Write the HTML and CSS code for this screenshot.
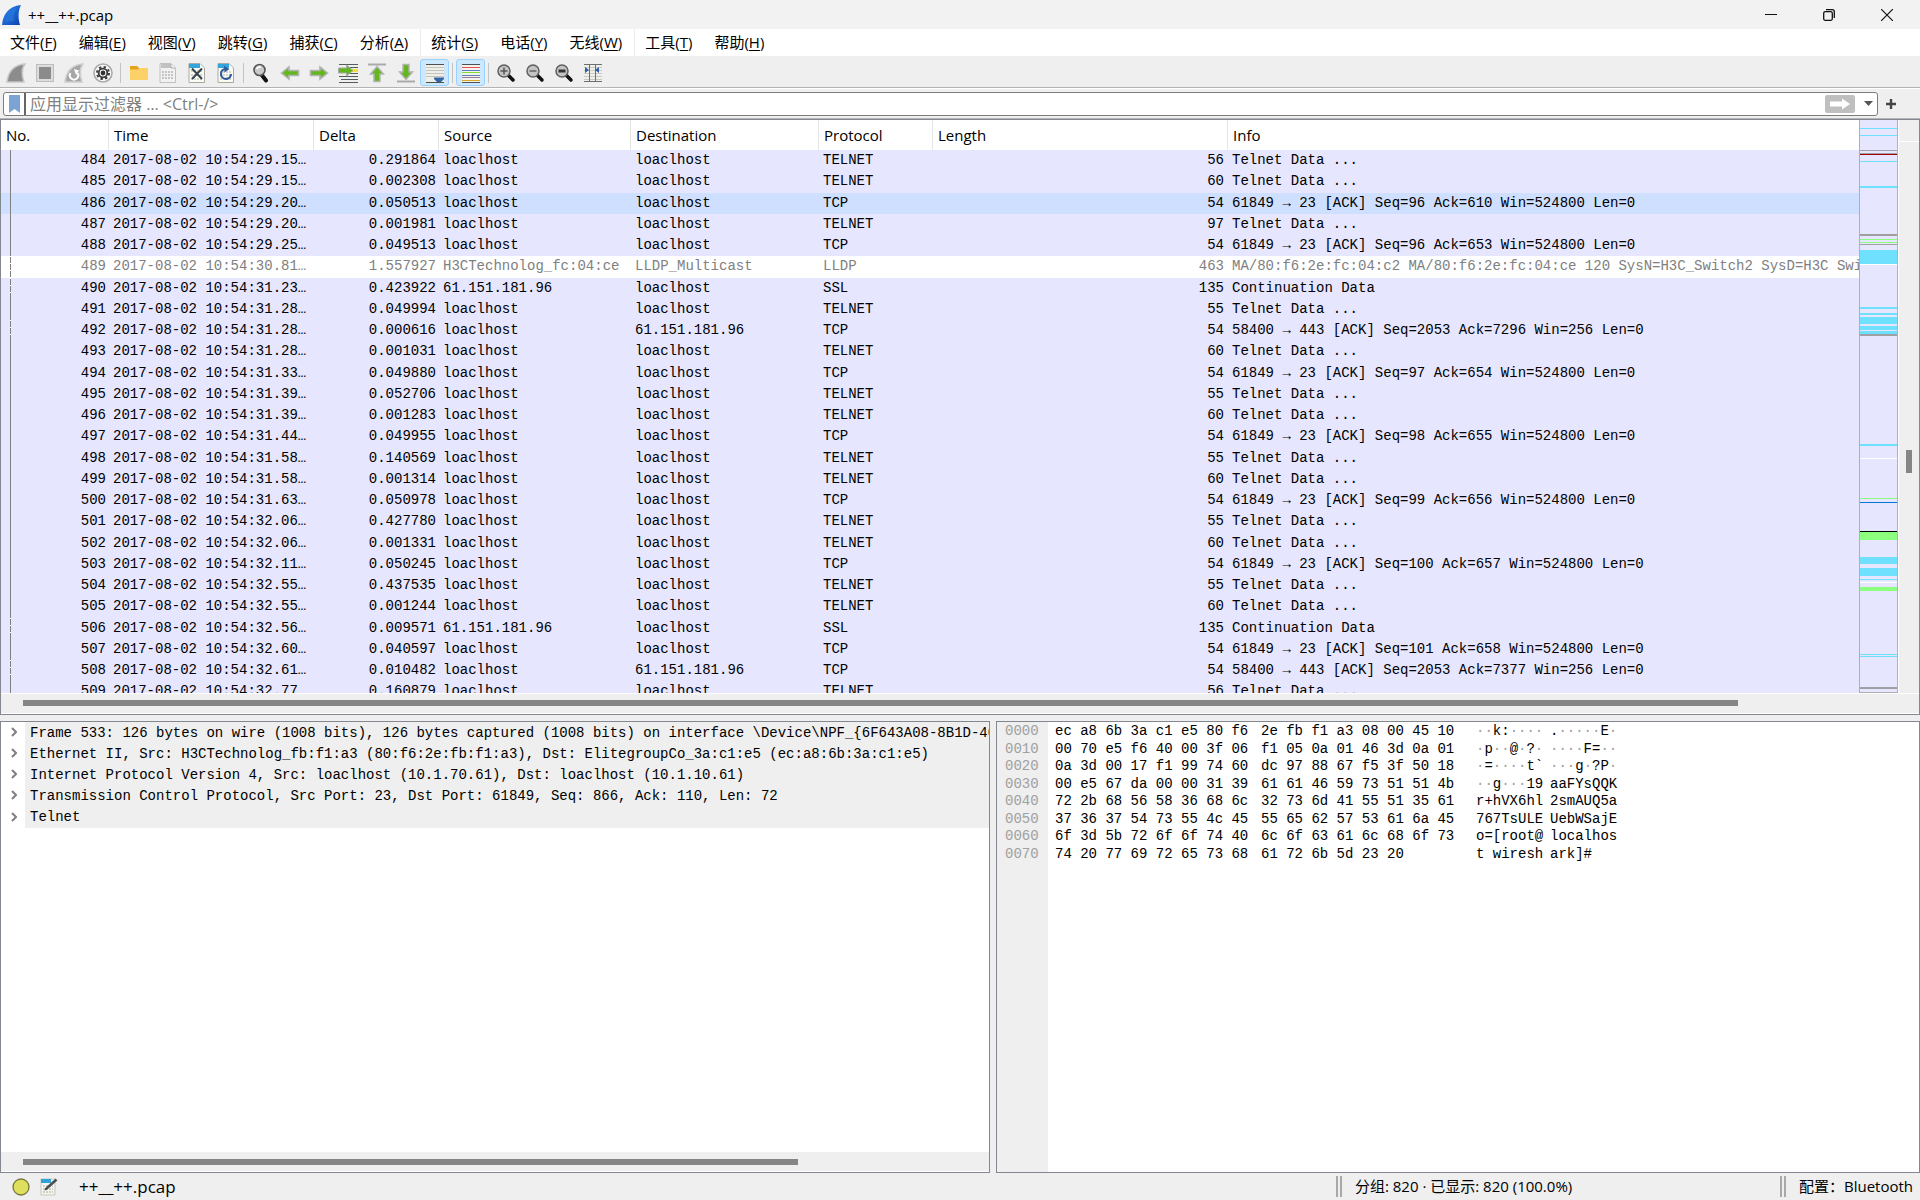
FILE: index.html
```html
<!DOCTYPE html>
<html lang="zh-CN">
<head>
<meta charset="utf-8">
<title>++__++.pcap</title>
<link rel="stylesheet" href="styles.css">
</head>
<body>
<header class="titlebar">
  <svg class="app-icon" width="20" height="20" viewBox="0 0 20 20"><defs><linearGradient id="fin" x1="0" y1="0" x2="1" y2="1"><stop offset="0" stop-color="#2f8cf0"/><stop offset="1" stop-color="#0a3fae"/></linearGradient></defs><path d="M0 20C1 10 6 1 19 0C16 6 16 13 18 20Z" fill="url(#fin)"/><path d="M3 17C5 9 9 4 15 2C12 7 11 12 12 16Z" fill="#2a7be0" opacity=".6"/></svg>
  <h1 class="title">++__++.pcap</h1>
  <div class="window-buttons">
    <button aria-label="最小化"><svg width="12" height="12" viewBox="0 0 12 12"><path d="M0 5.5H12" stroke="#111"/></svg></button>
    <button aria-label="还原"><svg width="12" height="12" viewBox="0 0 12 12" fill="none" stroke="#111" stroke-width="1.3"><rect x=".7" y="2.7" width="8.6" height="8.6" rx="1.5"/><path d="M3 .7H9.3Q11.3 .7 11.3 2.7V9"/></svg></button>
    <button aria-label="关闭"><svg width="12" height="12" viewBox="0 0 12 12"><path d="M0 0L12 12M12 0L0 12" stroke="#111" stroke-width="1.2"/></svg></button>
  </div>
</header>

<nav class="menubar">
  <button>文件(<u>F</u>)</button><button>编辑(<u>E</u>)</button><button>视图(<u>V</u>)</button><button>跳转(<u>G</u>)</button><button>捕获(<u>C</u>)</button><button>分析(<u>A</u>)</button>
  <button class="group">统计(<u>S</u>)</button><button>电话(<u>Y</u>)</button><button>无线(<u>W</u>)</button>
  <button class="group">工具(<u>T</u>)</button><button>帮助(<u>H</u>)</button>
</nav>

<div class="toolbar">
  <button aria-label="开始捕获"><svg width="20" height="20" viewBox="0 0 20 20"><path d="M1 19C2 10 7 2 19 1C15 6 16 13 18 19Z" fill="#8c8c8c" stroke="#c8c8c8" stroke-width="1.6"/></svg></button>
  <button aria-label="停止捕获"><svg width="20" height="20" viewBox="0 0 20 20"><rect x="1.5" y="1.5" width="17" height="17" fill="#ddd" stroke="#bdbdbd"/><rect x="4" y="4" width="12" height="12" fill="#8b8b8b"/></svg></button>
  <button aria-label="重新开始捕获"><svg width="20" height="20" viewBox="0 0 20 20"><path d="M1 19C2 10 7 2 19 1C15 6 16 13 18 19Z" fill="#a6a6a6" stroke="#cfcfcf" stroke-width="1.6"/><path d="M6.500 10A4.200 4.200 0 1 0 13.500 10" fill="none" stroke="#fff" stroke-width="2"/><path d="M10 6L15 7.500L12 12Z" fill="#fff"/></svg></button>
  <button aria-label="捕获选项"><svg width="20" height="20" viewBox="0 0 20 20"><circle cx="10" cy="10" r="9" fill="#fafafa" stroke="#aaa" stroke-width="1.600"/><circle cx="10" cy="10" r="6" fill="none" stroke="#3a3a3a" stroke-width="2" stroke-dasharray="2.350 2.350"/><circle cx="10" cy="10" r="4.300" fill="#fff" stroke="#3a3a3a" stroke-width="1.800"/><circle cx="10" cy="10" r="2.400" fill="#333"/></svg></button>
  <span class="sep"></span>
  <button aria-label="打开"><svg width="20" height="20" viewBox="0 0 20 20"><path d="M1 3H8L10 5H18V16H1Z" fill="#e5a21c"/><path d="M1 6.500H9L10.500 5H19V17H1Z" fill="#fbd168"/></svg></button>
  <button aria-label="保存"><svg width="20" height="20" viewBox="0 0 20 20"><path d="M2 .5H13L17.500 5V19.500H2Z" fill="#f2f2f2" stroke="#c0c0c0"/><path d="M3 1H13V5H3Z" fill="#c2c2c2"/><path d="M13 1V5H17" fill="#fff" stroke="#aaa"/><path d="M4 9H16M4 12H16M4 15H16" stroke="#c4c4c4" stroke-width="2" stroke-dasharray="2 1"/></svg></button>
  <button aria-label="关闭文件"><svg width="20" height="20" viewBox="0 0 20 20"><path d="M2 .5H13L17.500 5V19.500H2Z" fill="#fbfbf4" stroke="#aaa9a0"/><path d="M2 1H13L17 5H2Z" fill="#31a5dc"/><path d="M13 1V5H17" fill="#fff"/><path d="M4 8H16M4 12H16M4 16H16" stroke="#d5d5cd" stroke-width="2" stroke-dasharray="2 1"/><path d="M5 5.500L15 16M15 5.500L5 16" stroke="#35434c" stroke-width="2"/></svg></button>
  <button aria-label="重新载入"><svg width="20" height="20" viewBox="0 0 20 20"><path d="M2 .5H13L17.500 5V19.500H2Z" fill="#fbfbf4" stroke="#aaa9a0"/><path d="M2 1H13L17 5H2Z" fill="#31a5dc"/><path d="M13 1V5H17" fill="#fff"/><path d="M4 9H16M4 12H16M4 16H16" stroke="#d5d5cd" stroke-width="2" stroke-dasharray="2 1"/><path d="M9 6A5 5 0 1 0 15 11" fill="none" stroke="#2f5a9c" stroke-width="2.200"/><path d="M8 3L13.500 6L8.500 9.500Z" fill="#2f5a9c"/></svg></button>
  <span class="sep narrow"></span>
  <button aria-label="查找"><svg width="20" height="20" viewBox="0 0 20 20"><path d="M10 11L15 17.500" stroke="#111" stroke-width="4" stroke-linecap="round"/><circle cx="8.500" cy="7" r="5.500" fill="#c9c9c9" stroke="#555" stroke-width="1.600"/><path d="M5.500 6Q7 3.500 10 4" stroke="#fff" fill="none" stroke-width="1.500"/></svg></button>
  <button aria-label="后退"><svg width="20" height="20" viewBox="0 0 20 20"><path d="M1.500 10L9 4V7.500H18.500V12.500H9V16Z" fill="#62b71c" stroke="#b3b3b3" stroke-width="1.600"/></svg></button>
  <button aria-label="前进"><svg width="20" height="20" viewBox="0 0 20 20"><path d="M18.500 10L11 4V7.500H1.500V12.500H11V16Z" fill="#62b71c" stroke="#b3b3b3" stroke-width="1.600"/></svg></button>
  <button aria-label="转到分组"><svg width="20" height="20" viewBox="0 0 20 20"><path d="M1 1.500H20M12 4.500H20M12 10.500H20M1 13.500H20M3 16.500H20M1 19.500H20" stroke="#555c5c"/><path d="M13 7.500H20" stroke="#f7df3b" stroke-width="3"/><path d="M15 7.500L8.500 2V5H.5V10H8.500V13Z" fill="#62b71c" stroke="#aaa"/></svg></button>
  <button aria-label="首个分组"><svg width="20" height="20" viewBox="0 0 20 20"><path d="M1 1.500H19" stroke="#aaa" stroke-width="2"/><path d="M10 3.500L16.500 11H13V18.500H7V11H3.500Z" fill="#62b71c" stroke="#b3b3b3" stroke-width="1.400"/></svg></button>
  <button aria-label="末个分组"><svg width="20" height="20" viewBox="0 0 20 20"><path d="M1 18.500H19" stroke="#aaa" stroke-width="2"/><path d="M10 16.500L16.500 9H13V1.500H7V9H3.500Z" fill="#62b71c" stroke="#b3b3b3" stroke-width="1.400"/></svg></button>
  <button class="on" aria-label="自动滚动" aria-pressed="true"><svg width="20" height="20" viewBox="0 0 20 20"><rect x="1" y="1" width="18" height="18" fill="#efefe9"/><path d="M1 4.500H19M1 7.500H19M1 10.500H19M1 13.500H19" stroke="#c4c4bc"/><path d="M1 1.500H19M1 19.500H19" stroke="#4b5152" stroke-width="1.200"/><path d="M9 14.500H19V16L16 19H12L9 16Z" fill="#3465a4"/></svg></button>
  <span class="sep"></span>
  <button class="on" aria-label="着色" aria-pressed="true"><svg width="20" height="20" viewBox="0 0 20 20"><rect x="1" y="1" width="18" height="18" fill="#f3f3ee"/><path d="M1 1.500H19M1 19.500H19" stroke="#4b5152"/><path d="M1 4.500H19" stroke="#ef5050"/><path d="M1 7.500H19" stroke="#5b80bd"/><path d="M1 9.500H19" stroke="#80dd30"/><path d="M1 12.500H19" stroke="#5c7fb0"/><path d="M1 14.500H19" stroke="#9a7aa3"/><path d="M1 17.500H19" stroke="#d4a62a"/></svg></button>
  <span class="sep narrow"></span>
  <button aria-label="放大"><svg width="20" height="20" viewBox="0 0 20 20"><path d="M12 12L17 17" stroke="#111" stroke-width="3.500" stroke-linecap="round"/><circle cx="8" cy="8" r="6" fill="#c4c4c4" stroke="#606060" stroke-width="1.500"/><path d="M4.500 8H11.500M8 4.500V11.500" stroke="#555" stroke-width="1.500"/></svg></button>
  <button aria-label="缩小"><svg width="20" height="20" viewBox="0 0 20 20"><path d="M12 12L17 17" stroke="#111" stroke-width="3.500" stroke-linecap="round"/><circle cx="8" cy="8" r="6" fill="#c4c4c4" stroke="#606060" stroke-width="1.500"/><path d="M4.500 8H11.500" stroke="#666" stroke-width="1.500"/></svg></button>
  <button aria-label="正常大小"><svg width="20" height="20" viewBox="0 0 20 20"><path d="M12 12L17 17" stroke="#111" stroke-width="3.500" stroke-linecap="round"/><circle cx="8" cy="8" r="6" fill="#c4c4c4" stroke="#606060" stroke-width="1.500"/><path d="M4.500 8H11.500" stroke="#333" stroke-width="3"/></svg></button>
  <button aria-label="调整列宽"><svg width="20" height="20" viewBox="0 0 20 20"><rect x="1" y="1" width="18" height="18" fill="#efefe9"/><path d="M1 4.500H19M1 7.500H19M1 10.500H19M1 13.500H19M1 16.500H19" stroke="#c9cac3"/><path d="M1 1.500H19M1 18.500H19M6.500 1V19M12.500 1V19" stroke="#6a6f70"/><path d="M2 4L6 7L2 10ZM16 4L12 7L16 10Z" fill="#2f5fa8"/></svg></button>
</div>

<form class="filterbar">
  <div class="filter-box">
    <button type="button" class="bookmark" aria-label="书签"><svg width="11" height="18" viewBox="0 0 11 18"><path d="M0 0H11V18L5.500 14L0 18Z" fill="#7ba3d3"/></svg></button>
    <input type="text" aria-label="显示过滤器" placeholder="应用显示过滤器 … &lt;Ctrl-/&gt;">
    <button type="button" class="apply" aria-label="应用"><svg width="20" height="12" viewBox="0 0 20 12"><path d="M0 3.500H12V.5L20 6L12 11.500V8.500H0Z" fill="#fff"/></svg></button>
    <button type="button" class="drop" aria-label="历史"><svg width="9" height="5" viewBox="0 0 9 5"><path d="M0 0H9L4.500 5Z" fill="#555"/></svg></button>
  </div>
  <button type="button" class="add" aria-label="添加"><svg width="10" height="10" viewBox="0 0 10 10"><path d="M5 0V10M0 5H10" stroke="#444" stroke-width="2.400"/></svg></button>
</form>

<main class="panes">
<section class="packets">
  <div class="packets-main">
    <div class="table-clip">
      <table>
        <colgroup><col class="w-no"><col class="w-time"><col class="w-delta"><col class="w-src"><col class="w-dst"><col class="w-proto"><col class="w-len"><col></colgroup>
        <thead><tr><th>No.</th><th>Time</th><th>Delta</th><th>Source</th><th>Destination</th><th>Protocol</th><th>Length</th><th>Info</th></tr></thead>
        <tbody>
<tr><td>484</td><td>2017-08-02 10:54:29.15…</td><td>0.291864</td><td>loaclhost</td><td>loaclhost</td><td>TELNET</td><td>56</td><td>Telnet Data ...</td></tr>
<tr><td>485</td><td>2017-08-02 10:54:29.15…</td><td>0.002308</td><td>loaclhost</td><td>loaclhost</td><td>TELNET</td><td>60</td><td>Telnet Data ...</td></tr>
<tr class="hover"><td>486</td><td>2017-08-02 10:54:29.20…</td><td>0.050513</td><td>loaclhost</td><td>loaclhost</td><td>TCP</td><td>54</td><td>61849 → 23 [ACK] Seq=96 Ack=610 Win=524800 Len=0</td></tr>
<tr><td>487</td><td>2017-08-02 10:54:29.20…</td><td>0.001981</td><td>loaclhost</td><td>loaclhost</td><td>TELNET</td><td>97</td><td>Telnet Data ...</td></tr>
<tr><td>488</td><td>2017-08-02 10:54:29.25…</td><td>0.049513</td><td>loaclhost</td><td>loaclhost</td><td>TCP</td><td>54</td><td>61849 → 23 [ACK] Seq=96 Ack=653 Win=524800 Len=0</td></tr>
<tr class="lldp other"><td>489</td><td>2017-08-02 10:54:30.81…</td><td>1.557927</td><td>H3CTechnolog_fc:04:ce</td><td>LLDP_Multicast</td><td>LLDP</td><td>463</td><td>MA/80:f6:2e:fc:04:c2 MA/80:f6:2e:fc:04:ce 120 SysN=H3C_Switch2 SysD=H3C Swit</td></tr>
<tr class="other"><td>490</td><td>2017-08-02 10:54:31.23…</td><td>0.423922</td><td>61.151.181.96</td><td>loaclhost</td><td>SSL</td><td>135</td><td>Continuation Data</td></tr>
<tr><td>491</td><td>2017-08-02 10:54:31.28…</td><td>0.049994</td><td>loaclhost</td><td>loaclhost</td><td>TELNET</td><td>55</td><td>Telnet Data ...</td></tr>
<tr class="other"><td>492</td><td>2017-08-02 10:54:31.28…</td><td>0.000616</td><td>loaclhost</td><td>61.151.181.96</td><td>TCP</td><td>54</td><td>58400 → 443 [ACK] Seq=2053 Ack=7296 Win=256 Len=0</td></tr>
<tr><td>493</td><td>2017-08-02 10:54:31.28…</td><td>0.001031</td><td>loaclhost</td><td>loaclhost</td><td>TELNET</td><td>60</td><td>Telnet Data ...</td></tr>
<tr><td>494</td><td>2017-08-02 10:54:31.33…</td><td>0.049880</td><td>loaclhost</td><td>loaclhost</td><td>TCP</td><td>54</td><td>61849 → 23 [ACK] Seq=97 Ack=654 Win=524800 Len=0</td></tr>
<tr><td>495</td><td>2017-08-02 10:54:31.39…</td><td>0.052706</td><td>loaclhost</td><td>loaclhost</td><td>TELNET</td><td>55</td><td>Telnet Data ...</td></tr>
<tr><td>496</td><td>2017-08-02 10:54:31.39…</td><td>0.001283</td><td>loaclhost</td><td>loaclhost</td><td>TELNET</td><td>60</td><td>Telnet Data ...</td></tr>
<tr><td>497</td><td>2017-08-02 10:54:31.44…</td><td>0.049955</td><td>loaclhost</td><td>loaclhost</td><td>TCP</td><td>54</td><td>61849 → 23 [ACK] Seq=98 Ack=655 Win=524800 Len=0</td></tr>
<tr><td>498</td><td>2017-08-02 10:54:31.58…</td><td>0.140569</td><td>loaclhost</td><td>loaclhost</td><td>TELNET</td><td>55</td><td>Telnet Data ...</td></tr>
<tr><td>499</td><td>2017-08-02 10:54:31.58…</td><td>0.001314</td><td>loaclhost</td><td>loaclhost</td><td>TELNET</td><td>60</td><td>Telnet Data ...</td></tr>
<tr><td>500</td><td>2017-08-02 10:54:31.63…</td><td>0.050978</td><td>loaclhost</td><td>loaclhost</td><td>TCP</td><td>54</td><td>61849 → 23 [ACK] Seq=99 Ack=656 Win=524800 Len=0</td></tr>
<tr><td>501</td><td>2017-08-02 10:54:32.06…</td><td>0.427780</td><td>loaclhost</td><td>loaclhost</td><td>TELNET</td><td>55</td><td>Telnet Data ...</td></tr>
<tr><td>502</td><td>2017-08-02 10:54:32.06…</td><td>0.001331</td><td>loaclhost</td><td>loaclhost</td><td>TELNET</td><td>60</td><td>Telnet Data ...</td></tr>
<tr><td>503</td><td>2017-08-02 10:54:32.11…</td><td>0.050245</td><td>loaclhost</td><td>loaclhost</td><td>TCP</td><td>54</td><td>61849 → 23 [ACK] Seq=100 Ack=657 Win=524800 Len=0</td></tr>
<tr><td>504</td><td>2017-08-02 10:54:32.55…</td><td>0.437535</td><td>loaclhost</td><td>loaclhost</td><td>TELNET</td><td>55</td><td>Telnet Data ...</td></tr>
<tr><td>505</td><td>2017-08-02 10:54:32.55…</td><td>0.001244</td><td>loaclhost</td><td>loaclhost</td><td>TELNET</td><td>60</td><td>Telnet Data ...</td></tr>
<tr class="other"><td>506</td><td>2017-08-02 10:54:32.56…</td><td>0.009571</td><td>61.151.181.96</td><td>loaclhost</td><td>SSL</td><td>135</td><td>Continuation Data</td></tr>
<tr><td>507</td><td>2017-08-02 10:54:32.60…</td><td>0.040597</td><td>loaclhost</td><td>loaclhost</td><td>TCP</td><td>54</td><td>61849 → 23 [ACK] Seq=101 Ack=658 Win=524800 Len=0</td></tr>
<tr class="other"><td>508</td><td>2017-08-02 10:54:32.61…</td><td>0.010482</td><td>loaclhost</td><td>61.151.181.96</td><td>TCP</td><td>54</td><td>58400 → 443 [ACK] Seq=2053 Ack=7377 Win=256 Len=0</td></tr>
<tr><td>509</td><td>2017-08-02 10:54:32.77…</td><td>0.160879</td><td>loaclhost</td><td>loaclhost</td><td>TELNET</td><td>56</td><td>Telnet Data ...</td></tr>
        </tbody>
      </table>
    </div>
    <svg class="minimap" viewBox="0 0 37 571" preserveAspectRatio="none" shape-rendering="crispEdges">
      <rect width="37" height="571" fill="#e6e6ff"/>
      <g fill="#70e0ff"><rect y="8" width="37" height="1"/><rect y="15" width="37" height="1"/><rect y="41" width="37" height="1"/><rect y="66" width="37" height="2"/><rect y="130" width="37" height="14"/><rect y="187" width="37" height="2"/><rect y="193" width="37" height="2"/><rect y="197" width="37" height="7"/><rect y="206" width="37" height="4"/><rect y="211" width="37" height="3"/><rect y="324" width="37" height="2"/><rect y="436" width="37" height="7"/><rect y="447" width="37" height="8"/><rect y="458" width="37" height="1"/><rect y="533" width="37" height="1"/><rect y="535" width="37" height="1"/></g>
      <g fill="#a0a0a4"><rect y="30" width="37" height="1"/><rect y="33" width="37" height="1"/><rect y="114" width="37" height="2"/><rect y="124" width="37" height="1"/><rect y="214" width="37" height="2"/><rect y="566" width="37" height="2"/></g>
      <g fill="#8cff7f"><rect y="119" width="37" height="1"/><rect y="122" width="37" height="1"/><rect y="377" width="37" height="1"/><rect y="411" width="37" height="8"/><rect y="466" width="37" height="4"/></g>
      <g fill="#fff"><rect y="144" width="37" height="1"/><rect y="337" width="37" height="1"/><rect y="461" width="37" height="1"/></g>
      <rect y="34" width="37" height="1" fill="#a40000"/><rect y="381" width="37" height="1" fill="#0078d7"/><rect y="410" width="37" height="1" fill="#000"/>
    </svg>
    <div class="vscroll"><i class="before"></i><i class="thumb"></i><i class="after"></i></div>
  </div>
  <div class="hscroll"><i class="thumb"></i></div>
</section>

<div class="lower">
  <section class="details">
    <ul>
      <li><svg width="6" height="10" viewBox="0 0 6 10"><path d="M1 1L5 5L1 9"/></svg><span>Frame 533: 126 bytes on wire (1008 bits), 126 bytes captured (1008 bits) on interface \Device\NPF_{6F643A08-8B1D-40EA</span></li>
      <li><svg width="6" height="10" viewBox="0 0 6 10"><path d="M1 1L5 5L1 9"/></svg><span>Ethernet II, Src: H3CTechnolog_fb:f1:a3 (80:f6:2e:fb:f1:a3), Dst: ElitegroupCo_3a:c1:e5 (ec:a8:6b:3a:c1:e5)</span></li>
      <li><svg width="6" height="10" viewBox="0 0 6 10"><path d="M1 1L5 5L1 9"/></svg><span>Internet Protocol Version 4, Src: loaclhost (10.1.70.61), Dst: loaclhost (10.1.10.61)</span></li>
      <li><svg width="6" height="10" viewBox="0 0 6 10"><path d="M1 1L5 5L1 9"/></svg><span>Transmission Control Protocol, Src Port: 23, Dst Port: 61849, Seq: 866, Ack: 110, Len: 72</span></li>
      <li><svg width="6" height="10" viewBox="0 0 6 10"><path d="M1 1L5 5L1 9"/></svg><span>Telnet</span></li>
    </ul>
    <div class="hscroll"><i class="thumb"></i></div>
  </section>
  <section class="bytes">
    <div class="hex-row"><span class="offset">0000</span><span>ec a8 6b 3a c1 e5 80 f6</span><span>2e fb f1 a3 08 00 45 10</span><span><b>··</b>k:<b>····</b></span><span>.<b>·····</b>E<b>·</b></span></div>
    <div class="hex-row"><span class="offset">0010</span><span>00 70 e5 f6 40 00 3f 06</span><span>f1 05 0a 01 46 3d 0a 01</span><span><b>·</b>p<b>··</b>@<b>·</b>?<b>·</b></span><span><b>····</b>F=<b>··</b></span></div>
    <div class="hex-row"><span class="offset">0020</span><span>0a 3d 00 17 f1 99 74 60</span><span>dc 97 88 67 f5 3f 50 18</span><span><b>·</b>=<b>····</b>t`</span><span><b>···</b>g<b>·</b>?P<b>·</b></span></div>
    <div class="hex-row"><span class="offset">0030</span><span>00 e5 67 da 00 00 31 39</span><span>61 61 46 59 73 51 51 4b</span><span><b>··</b>g<b>···</b>19</span><span>aaFYsQQK</span></div>
    <div class="hex-row"><span class="offset">0040</span><span>72 2b 68 56 58 36 68 6c</span><span>32 73 6d 41 55 51 35 61</span><span>r+hVX6hl</span><span>2smAUQ5a</span></div>
    <div class="hex-row"><span class="offset">0050</span><span>37 36 37 54 73 55 4c 45</span><span>55 65 62 57 53 61 6a 45</span><span>767TsULE</span><span>UebWSajE</span></div>
    <div class="hex-row"><span class="offset">0060</span><span>6f 3d 5b 72 6f 6f 74 40</span><span>6c 6f 63 61 6c 68 6f 73</span><span>o=[root@</span><span>localhos</span></div>
    <div class="hex-row"><span class="offset">0070</span><span>74 20 77 69 72 65 73 68</span><span>61 72 6b 5d 23 20</span><span>t wiresh</span><span>ark]#</span></div>
    <div class="hex-rest"></div>
  </section>
</div>
</main>

<footer class="statusbar">
  <div class="status-file">
    <svg width="18" height="18" viewBox="0 0 18 18"><circle cx="9" cy="9" r="8" fill="#dfdf5e" stroke="#77773c" stroke-width="1.300"/></svg>
    <svg width="18" height="18" viewBox="0 0 18 18"><path d="M1 1H15V17H1Z" fill="#f5f5f0" stroke="#c5c5c0"/><path d="M1 1H11V5H1Z" fill="#2fa2da"/><path d="M3 8H13M3 11H13M3 14H13" stroke="#cfcfc8" stroke-width="2" stroke-dasharray="2 1"/><path d="M7 10L16.500 1.500" stroke="#4a4f52" stroke-width="2.600"/><path d="M4.500 12.500L6 9L8 11Z" fill="#222"/></svg>
    <span>++__++.pcap</span>
  </div>
  <div class="status-count">分组: 820 · 已显示: 820 (100.0%)</div>
  <div class="status-profile">配置：Bluetooth</div>
</footer>
</body>
</html>
```
FILE: styles.css
```css
* { box-sizing: border-box; }

body {
  margin: 0;
  height: 100vh;
  display: flex;
  flex-direction: column;
  overflow: hidden;
  background: #efefef;
  color: #000;
  font: 15px/20px "Open Sans", "Noto Sans CJK SC", sans-serif;
}

button {
  display: flex;
  align-items: center;
  justify-content: center;
  padding: 0;
  border: 0;
  background: none;
  color: inherit;
  font: inherit;
  white-space: nowrap;
}

svg { display: block; flex: none; }

/* Title and menus */
.titlebar {
  display: flex;
  align-items: center;
  height: 29px;
  flex: none;
  padding-left: 2px;
  background: #f2f2f2;
}
.title { margin: 0 auto 0 6px; font-size: 15px; font-weight: 400; }
.window-buttons { display: flex; padding-right: 4px; }
.window-buttons button { width: 58px; height: 29px; }

.menubar {
  display: flex;
  flex: none;
  height: 27px;
  background: #fff;
}
.menubar button { padding: 0 12px 2px 10px; }
.menubar .group { border-left: 1px solid #ececec; }
.menubar u { text-underline-offset: 2px; }

/* Toolbar */
.toolbar {
  display: flex;
  align-items: center;
  flex: none;
  height: 33px;
  padding: 2px 0 1px 1px;
  border-bottom: 1px solid #fff;
  box-shadow: inset 0 -1px #b4b4b4;
}
.toolbar button { width: 29px; height: 27px; border: 1px solid transparent; border-radius: 3px; }
.toolbar .on { background: #cce8ff; border-color: #99d1ff; }
.sep { width: 7px; height: 20px; padding-left: 3px; }
.sep.narrow { width: 6px; }
.sep::before { content: ""; display: block; width: 1px; height: 20px; background: #c3c3c3; }

/* Display filter */
.filterbar {
  display: flex;
  align-items: center;
  flex: none;
  height: 30px;
  margin: 0;
  padding: 0 17px 0 3px;
  border-bottom: 1px solid #b4b4b4;
}
.filter-box {
  display: flex;
  align-items: center;
  flex: 1;
  height: 24px;
  background: #fff;
  border: 1px solid #7d7d7d;
  border-radius: 3px;
}
.bookmark { width: 22px; height: 22px; border-right: 2px solid #666; }
.filter-box input {
  flex: 1;
  min-width: 0;
  height: 22px;
  padding: 0 4px;
  border: 0;
  background: none;
  font: inherit;
  font-size: 16px;
}
.filter-box input::placeholder { color: #808080; opacity: 1; }
.apply { width: 30px; height: 18px; background: #bfbfbf; border-radius: 2px; }
.drop { width: 22px; height: 22px; padding-left: 4px; }
.add { width: 24px; height: 24px; margin-left: 1px; }

/* Packet list */
.panes { flex: 1; min-height: 0; display: flex; flex-direction: column; gap: 6px; }
.packets {
  flex: 595 1 0;
  min-height: 0;
  display: flex;
  flex-direction: column;
  border: 1px solid #828790;
}
.packets-main { flex: 1; min-height: 0; display: flex; }
.table-clip { flex: 1; min-width: 0; overflow: hidden; background: #fff; }
table { width: 100%; table-layout: fixed; border-collapse: collapse; }
.w-no { width: 108px; }
.w-time { width: 205px; }
.w-delta { width: 125px; }
.w-src { width: 192px; }
.w-dst { width: 188px; }
.w-proto { width: 114px; }
.w-len { width: 295px; }
th {
  height: 30px;
  padding: 0 0 0 5px;
  text-align: left;
  font-weight: 400;
  box-shadow: inset -1px 0 #e4e4e4;
}
th:last-child { box-shadow: none; }
td {
  height: 21px;
  padding: 0 4px;
  overflow: hidden;
  white-space: nowrap;
  vertical-align: top;
  line-height: 20px;
}
tbody tr:nth-child(4n+2) td { height: 22px; }
tbody, .details, .bytes { font-family: "Liberation Mono", monospace; font-size: 14px; }
tbody tr { background: #e6e6ff; }
tbody .hover { background: #cfdfff; }
tbody .lldp { background: #fff; color: #808080; }
td:nth-child(1), td:nth-child(3), td:nth-child(7) { text-align: right; }
td:nth-child(1), td:nth-child(3) { padding-right: 3px; }
td:last-child { padding-right: 0; }
td:first-child { background: linear-gradient(#808080, #808080) 9px 0 / 1px 100% no-repeat; }
.other td:first-child { background: linear-gradient(#fff 1px, #808080 1px) 9px 0 / 1px 7px repeat-y; }

.minimap {
  width: 39px;
  height: 100%;
  border: solid #b0b0b0;
  border-width: 0 1px 1px;
}
.vscroll {
  display: flex;
  flex-direction: column;
  align-items: center;
  width: 21px;
  border-left: 1px solid #fff;
  background: linear-gradient(#fff, #fff) 0 21px / 100% 1px no-repeat #efefef;
}
.vscroll .before { flex: 329; }
.vscroll .after { flex: 220; }
.vscroll .thumb { width: 6px; height: 23px; background: #858585; }
.hscroll {
  display: flex;
  align-items: center;
  flex: none;
  height: 21px;
  padding-left: 22px;
  border: solid #fff;
  border-width: 1px 0;
  background: #efefef;
}
.hscroll .thumb { height: 6px; background: #858585; }
.hscroll::after { content: ""; }
.packets .hscroll .thumb { flex: 1715; }
.packets .hscroll::after { flex: 181; }
.details .hscroll .thumb { flex: 775; }
.details .hscroll::after { flex: 191; }

/* Details and bytes */
.lower {
  flex: 453 1 0;
  min-height: 0;
  display: grid;
  grid-template-columns: 990fr 924fr;
  gap: 6px;
}
.details, .bytes { min-width: 0; overflow: hidden; background: #fff; border: 1px solid #828790; }
.details { display: flex; flex-direction: column; justify-content: space-between; }
.details ul { margin: 0; padding: 0; list-style: none; }
.details li { display: flex; align-items: center; height: 21px; padding-left: 10px; white-space: pre; }
.details li:last-child { height: 22px; }
.details li svg { fill: none; stroke: #808080; stroke-width: 2; margin-right: 8px; }
.details li span { flex: 1; min-width: 0; align-self: stretch; padding-left: 5px; background: #efefef; overflow: hidden; line-height: 22px; }

.bytes { display: flex; flex-direction: column; }
.hex-row {
  display: grid;
  grid-template-columns: 51px 206px 215px 74px 1fr;
  height: 18px;
  line-height: 18px;
  white-space: pre;
}
.hex-row:nth-child(even) { height: 17px; }
.hex-row span + span { padding-left: 7px; }
.hex-row b { font-weight: 400; color: #a0a0a0; }
.offset { padding-left: 8px; background: #efefef; color: #a0a0a0; }
.hex-rest { flex: 1; width: 51px; background: #efefef; }

/* Status bar */
.statusbar { display: flex; align-items: center; flex: none; height: 27px; }
.status-file { flex: 1; display: flex; align-items: center; gap: 10px; padding-left: 12px; }
.status-file span { margin-left: 11px; font-size: 17px; }
.status-count, .status-profile {
  height: 21px;
  padding-left: 13px;
  border-left: 6px double #a8a8a8;
  white-space: nowrap;
}
.status-count { width: 444px; }
.status-profile { padding-right: 7px; }
```
